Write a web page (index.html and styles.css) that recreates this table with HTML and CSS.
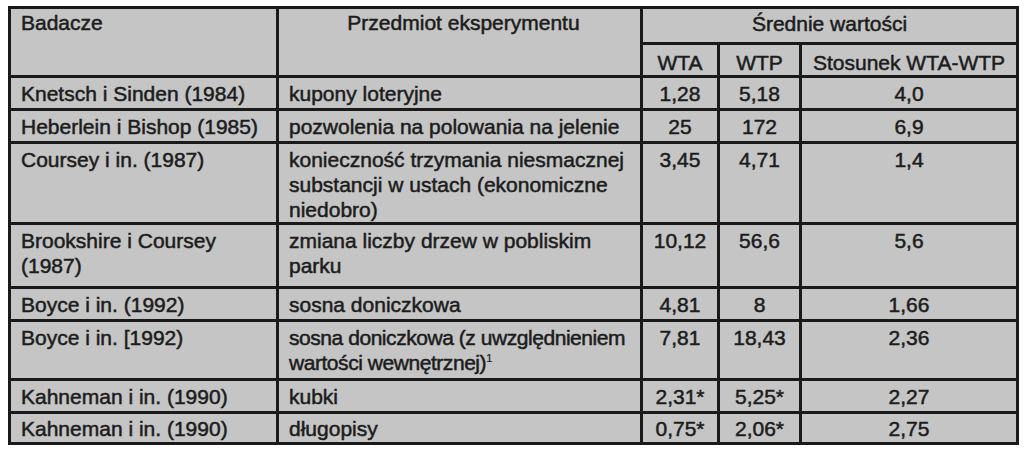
FILE: index.html
```html
<!DOCTYPE html>
<html lang="pl">
<head>
<meta charset="utf-8">
<title>Średnie wartości WTA i WTP</title>
<link rel="stylesheet" href="styles.css">
</head>
<body>
<table class="data">
  <colgroup>
    <col class="c1"><col class="c2"><col class="c3"><col class="c4"><col class="c5">
  </colgroup>
  <thead>
    <tr class="h1">
      <th rowspan="2" class="left">Badacze</th>
      <th rowspan="2" class="top">Przedmiot eksperymentu</th>
      <th colspan="3" class="mid">Średnie wartości</th>
    </tr>
    <tr class="h2">
      <th class="mid">WTA</th>
      <th class="mid">WTP</th>
      <th class="mid">Stosunek WTA-WTP</th>
    </tr>
  </thead>
  <tbody>
    <tr><td>Knetsch i Sinden (1984)</td><td>kupony loteryjne</td><td class="n">1,28</td><td class="n">5,18</td><td class="n">4,0</td></tr>
    <tr><td>Heberlein i Bishop (1985)</td><td>pozwolenia na polowania na jelenie</td><td class="n">25</td><td class="n">172</td><td class="n">6,9</td></tr>
    <tr class="r3"><td>Coursey i in. (1987)</td><td>konieczność trzymania niesmacznej substancji w ustach (ekonomiczne niedobro)</td><td class="n">3,45</td><td class="n">4,71</td><td class="n">1,4</td></tr>
    <tr class="r2a"><td>Brookshire i Coursey (1987)</td><td>zmiana liczby drzew w pobliskim parku</td><td class="n">10,12</td><td class="n">56,6</td><td class="n">5,6</td></tr>
    <tr><td>Boyce i in. (1992)</td><td>sosna doniczkowa</td><td class="n">4,81</td><td class="n">8</td><td class="n">1,66</td></tr>
    <tr class="r2b"><td>Boyce i in. [1992)</td><td class="tight">sosna doniczkowa (z uwzględnieniem wartości wewnętrznej)<sup class="note">1</sup></td><td class="n">7,81</td><td class="n">18,43</td><td class="n">2,36</td></tr>
    <tr><td>Kahneman i in. (1990)</td><td>kubki</td><td class="n">2,31*</td><td class="n">5,25*</td><td class="n">2,27</td></tr>
    <tr class="last"><td>Kahneman i in. (1990)</td><td>długopisy</td><td class="n">0,75*</td><td class="n">2,06*</td><td class="n">2,75</td></tr>
  </tbody>
</table>
</body>
</html>
```

FILE: styles.css
```css
html, body {
  margin: 0;
  padding: 0;
  background: #ffffff;
}

body {
  padding: 6px 0 0 8px;
}

.data {
  border-collapse: collapse;
  table-layout: fixed;
  width: 1008px;
  font-family: "Liberation Sans", Arial, sans-serif;
  font-size: 21px;
  line-height: 25px;
  color: #1c1c1c;
  background: #c5c5c5;
  border: 3px solid #1a1a1a;
}

.c1 { width: 268px; }
.c2 { width: 364px; }
.c3 { width: 77px; }
.c4 { width: 82px; }
.c5 { width: 217px; }

.data th,
.data td {
  border: 3px solid #1a1a1a;
  padding: 3px 2px 2px 10px;
  vertical-align: top;
  text-align: left;
  font-weight: normal;
  -webkit-text-stroke: 0.5px #1c1c1c;
}

.data th.left {
  text-align: left;
  padding-top: 1px;
}

.data th.top {
  text-align: center;
  padding-top: 1px;
}

.data th.mid {
  text-align: center;
  padding-left: 4px;
  padding-right: 4px;
}

.h1 .mid { padding-top: 2px; padding-bottom: 6px; }
.h2 .mid { padding-top: 5px; padding-bottom: 0; }

.data td.n {
  text-align: center;
  padding-left: 4px;
  padding-right: 4px;
}

.data td.tight {
  letter-spacing: -0.45px;
  padding-right: 0;
}

.r3 td { padding-bottom: 0; }
.r2a td { padding-bottom: 8px; }
.r2b td { padding-bottom: 3px; }
.last td { padding-top: 2px; padding-bottom: 1px; }

.note {
  font-size: 11px;
  line-height: 0;
  vertical-align: 8px;
  letter-spacing: 0;
  -webkit-text-stroke: 0.2px #1c1c1c;
}
```
